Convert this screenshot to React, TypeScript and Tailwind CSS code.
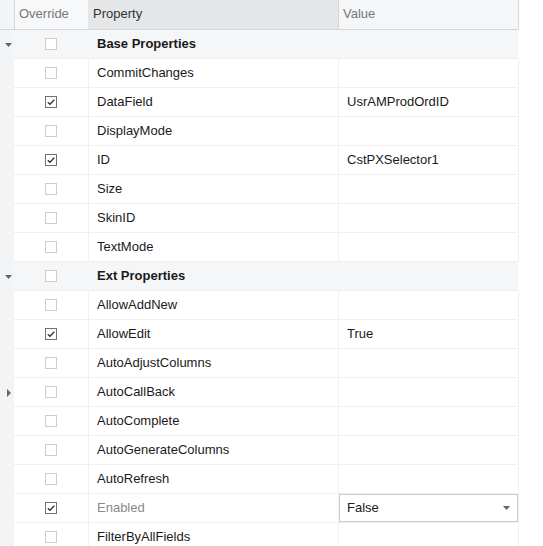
import React from "react";

type Row =
  | { kind: "group"; label: string; expand: "down" }
  | { kind: "item"; label: string; checked?: boolean; value?: string; disabled?: boolean; dropdown?: boolean; arrow?: "right" };

const rows: Row[] = [
  { kind: "group", label: "Base Properties", expand: "down" },
  { kind: "item", label: "CommitChanges" },
  { kind: "item", label: "DataField", checked: true, value: "UsrAMProdOrdID" },
  { kind: "item", label: "DisplayMode" },
  { kind: "item", label: "ID", checked: true, value: "CstPXSelector1" },
  { kind: "item", label: "Size" },
  { kind: "item", label: "SkinID" },
  { kind: "item", label: "TextMode" },
  { kind: "group", label: "Ext Properties", expand: "down" },
  { kind: "item", label: "AllowAddNew" },
  { kind: "item", label: "AllowEdit", checked: true, value: "True" },
  { kind: "item", label: "AutoAdjustColumns" },
  { kind: "item", label: "AutoCallBack", arrow: "right" },
  { kind: "item", label: "AutoComplete" },
  { kind: "item", label: "AutoGenerateColumns" },
  { kind: "item", label: "AutoRefresh" },
  { kind: "item", label: "Enabled", checked: true, disabled: true, dropdown: true, value: "False" },
  { kind: "item", label: "FilterByAllFields" },
];

function Box({ checked }: { checked?: boolean }) {
  return (
    <div
      className={`w-[12px] h-[12px] border ${checked ? "border-[#707070]" : "border-[#cdcdcd]"} bg-white flex items-center justify-center`}
    >
      {checked && (
        <svg width="10" height="10" viewBox="0 0 10 10">
          <path d="M1.8 5.2 L4 7.3 L8.3 2.8" fill="none" stroke="#333" strokeWidth="1.3" />
        </svg>
      )}
    </div>
  );
}

export default function App() {
  return (
    <div
      className="w-[543px] h-[546px] overflow-hidden bg-white text-[13px] text-[#1a1a1a]"
      style={{ fontFamily: '"Liberation Sans", Arial, sans-serif' }}
    >
      {/* header */}
      <div className="flex h-[30px] w-[519px]">
        <div className="w-[14px] bg-[#f3f4f5] border-b border-[#d4d6d8]" />
        <div className="w-[74px] bg-[#f7f8f9] border-l border-b border-[#d4d6d8] flex items-center pl-[4px] pb-[2px] text-[#777]">
          Override
        </div>
        <div className="w-[250px] bg-[#e4e6e8] border-b border-[#d4d6d8] flex items-center pl-[5px] pb-[2px] text-[#333]">
          Property
        </div>
        <div className="w-[181px] bg-[#f5f6f7] border-l border-r border-b border-[#d4d6d8] flex items-center pl-[4px] pb-[2px] text-[#777]">
          Value
        </div>
      </div>
      {rows.map((r, i) => {
        if (r.kind === "group") {
          return (
            <div key={i} className="flex h-[29px] w-[518px]">
              <div className="w-[14px] bg-[#f3f4f5] flex items-center justify-center">
                <svg width="7" height="4" viewBox="0 0 7 4" className="ml-[2px]">
                  <path d="M0 0 L7 0 L3.5 4 Z" fill="#666" />
                </svg>
              </div>
              <div className="flex-1 flex bg-[#f5f6f8] border-b border-[#eeeff0]">
                <div className="w-[74px] flex items-center justify-center">
                  <Box />
                </div>
                <div className="flex items-center pl-[9px] font-bold text-[#1a1a1a]">{r.label}</div>
              </div>
            </div>
          );
        }
        return (
          <div key={i} className="flex h-[29px] w-[519px]">
            <div className="w-[14px] bg-[#f3f4f5] flex items-center justify-center">
              {r.arrow === "right" && (
                <svg width="4" height="8" viewBox="0 0 4 8" className="ml-[3px]">
                  <path d="M0 0 L4 4 L0 8 Z" fill="#666" />
                </svg>
              )}
            </div>
            <div className="w-[74px] border-b border-[#f0f0f0] flex items-center justify-center">
              <Box checked={r.checked} />
            </div>
            <div
              className={`w-[250px] border-l border-b border-[#f0f0f0] flex items-center pl-[8px] ${r.disabled ? "text-[#8a8a8a]" : "text-[#1a1a1a]"}`}
            >
              {r.label}
            </div>
            <div className="w-[181px] border-l border-r border-b border-[#f0f0f0] flex items-center">
              {r.dropdown ? (
                <div className="w-[179px] h-[28px] border border-[#cccccc] bg-white flex items-center justify-between pl-[7px] pr-[7px]">
                  <span>{r.value}</span>
                  <svg width="7" height="4" viewBox="0 0 7 4">
                    <path d="M0 0 L7 0 L3.5 4 Z" fill="#666" />
                  </svg>
                </div>
              ) : (
                <span className="pl-[8px]">{r.value}</span>
              )}
            </div>
          </div>
        );
      })}
    </div>
  );
}
